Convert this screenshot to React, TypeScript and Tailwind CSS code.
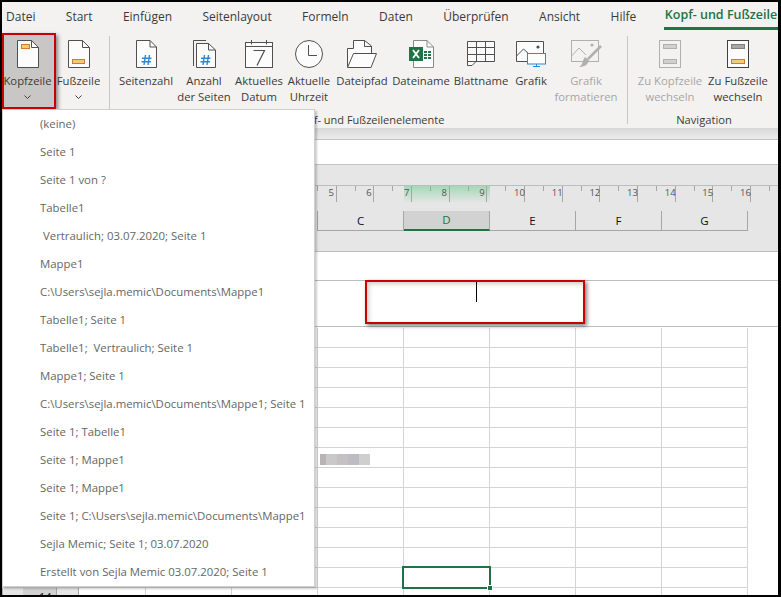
import type { ReactNode } from "react";

const FONT = "font-['Open_Sans','Noto_Sans',sans-serif]";

const tabs = ["Datei", "Start", "Einfügen", "Seitenlayout", "Formeln", "Daten", "Überprüfen", "Ansicht", "Hilfe"];

const menuItems = [
  "(keine)",
  "Seite 1",
  "Seite 1 von ?",
  "Tabelle1",
  "\u00a0Vertraulich; 03.07.2020; Seite 1",
  "Mappe1",
  "C:\\Users\\sejla.memic\\Documents\\Mappe1",
  "Tabelle1; Seite 1",
  "Tabelle1;\u00a0 Vertraulich; Seite 1",
  "Mappe1; Seite 1",
  "C:\\Users\\sejla.memic\\Documents\\Mappe1; Seite 1",
  "Seite 1; Tabelle1",
  "Seite 1; Mappe1",
  "Seite 1; Mappe1",
  "Seite 1; C:\\Users\\sejla.memic\\Documents\\Mappe1",
  "Sejla Memic; Seite 1; 03.07.2020",
  "Erstellt von Sejla Memic 03.07.2020; Seite 1",
];

const Page = ({ band }: { band: "top" | "bottom" }) => (
  <svg width="22" height="28" viewBox="0 0 22 28" fill="none">
    <path d="M.5 .5H14.5L21.5 7.5V27.5H.5Z" fill="#fcfcfc" stroke="#505050" />
    <path d="M14.5 .5V7.5H21.5" stroke="#505050" />
    {band === "top" ? (
      <rect x="4.5" y="4.5" width="8" height="4" fill="#f8c878" stroke="#d9772b" />
    ) : (
      <rect x="4.5" y="19.5" width="12" height="4" fill="#f8c878" stroke="#d9772b" />
    )}
  </svg>
);

const Hash = ({ stacked }: { stacked?: boolean }) => (
  <svg width={stacked ? 23 : 21} height="28" viewBox={stacked ? "0 0 23 28" : "2 0 21 28"} fill="none">
    {stacked && <path d="M.5 26V.5H13" stroke="#505050" />}
    <path d={stacked ? "M3.5 3.5H15.5L22.5 10V27.5H3.5Z" : "M2.5 .5H16L22.5 7V27.5H2.5Z"} fill="#fcfcfc" stroke="#505050" />
    <path d={stacked ? "M15.5 3.5V10H22.5" : "M16 .5V7H22.5"} stroke="#505050" />
    <path d="M11.5 15L10 25M15.5 15L14 25M8 18.2H17.5M7.5 21.8H17" stroke="#2b88d8" strokeWidth="1.4" />
  </svg>
);

const CalIcon = () => (
  <svg width="28" height="28" viewBox="0 0 28 28" fill="none">
    <rect x=".5" y="2.5" width="27" height="25" fill="#fcfcfc" stroke="#505050" />
    <path d="M.5 6.5H27.5" stroke="#505050" />
    <path d="M6.5 0V4.5M21.5 0V4.5" stroke="#505050" />
    <path d="M8.5 10.5H19.5L12 25.5" stroke="#505050" strokeWidth="1.2" />
  </svg>
);

const ClockIcon = () => (
  <svg width="28" height="28" viewBox="0 0 28 28" fill="none">
    <circle cx="14" cy="14" r="13.5" fill="#fcfcfc" stroke="#505050" />
    <path d="M13.5 5V15.5H22" stroke="#505050" />
  </svg>
);

const FolderIcon = () => (
  <svg width="30" height="28" viewBox="0 0 30 28" fill="none">
    <path d="M.5 27V8.5H6.5V.5H17.5L24.5 6V13" fill="#fcfcfc" stroke="#505050" />
    <path d="M17.5 .5V6.5H24.5" stroke="#505050" />
    <path d="M.5 27.5L6.5 13.5H29.5L24 27.5Z" fill="#fcfcfc" stroke="#505050" />
  </svg>
);

const ExcelIcon = () => (
  <svg width="25" height="28" viewBox="0 0 25 28" fill="none">
    <path d="M4.5 .5H18L24.5 7V27.5H4.5Z" fill="#fcfcfc" stroke="#8a8a8a" />
    <path d="M18 .5V7H24.5" stroke="#8a8a8a" />
    <rect x="0" y="7" width="14" height="14" fill="#1f7345" />
    <path d="M4 10L10 18M10 10L4 18" stroke="#fff" strokeWidth="1.8" />
    <path d="M15 11H18V13H15ZM19 11H22V13H19ZM15 14H18V16H15ZM19 14H22V16H19ZM15 17H18V19H15ZM19 17H22V19H19Z" fill="#1f7345" />
  </svg>
);

const SheetIcon = () => (
  <svg width="28" height="26" viewBox="0 0 28 26" fill="none">
    <path d="M.5 .5H27.5V20.5H9L5 24.5H.5Z" fill="#fcfcfc" stroke="#505050" />
    <path d="M.5 6.5H27.5M.5 13.5H27.5M.5 20.5H9M9.5 .5V20.5M18.5 .5V20.5" stroke="#505050" />
  </svg>
);

const PictureIcon = () => (
  <svg width="31" height="26" viewBox="0 0 31 26" fill="none">
    <path d="M11 20.5H.5V.5H27.5V12" fill="#fcfcfc" stroke="#505050" />
    <path d="M.5 15L7.5 8L13 13" stroke="#505050" />
    <circle cx="22" cy="6" r="1.6" fill="#505050" />
    <rect x="11.5" y="12.5" width="18" height="10.5" fill="#fcfcfc" stroke="#2b88d8" />
    <path d="M20.5 23V25.5M17 25.5H24" stroke="#2b88d8" />
  </svg>
);

const PictureFormatIcon = () => (
  <svg width="31" height="28" viewBox="0 0 31 28" fill="none">
    <rect x=".5" y=".5" width="27" height="21" stroke="#b0b0b0" />
    <path d="M.5 16L8 8L15 15" stroke="#b0b0b0" />
    <circle cx="21" cy="5" r="1.6" fill="#b0b0b0" />
    <path d="M30 6L17 19" stroke="#b0b0b0" strokeWidth="2.5" />
    <path d="M8 27C13 27 17 25 18 20L14 17C11 21 12 25 8 27Z" fill="#b0b0b0" />
  </svg>
);

const NavIcon = ({ active }: { active?: boolean }) => (
  <svg width="22" height="28" viewBox="0 0 22 28" fill="none">
    <rect x=".5" y=".5" width="21" height="27" fill={active ? "#fcfcfc" : "#f3f2f1"} stroke={active ? "#404040" : "#b0b0b0"} />
    <rect x="4.5" y="4.5" width="13" height="4" fill={active ? "#a8a8a8" : "#d0d0d0"} stroke={active ? "#808080" : "#b0b0b0"} />
    <rect
      x="4.5"
      y="19.5"
      width="13"
      height="4"
      fill={active ? "#f8c878" : "#d0d0d0"}
      stroke={active ? "#d9772b" : "#b0b0b0"}
    />
  </svg>
);

const Chevron = () => (
  <svg width="7" height="5" viewBox="0 0 7 5" fill="none">
    <path d="M.5 .5L3.5 3.5L6.5 .5" stroke="#404040" />
  </svg>
);

type ToolProps = {
  icon: ReactNode;
  lines: string[];
  width: string;
  disabled?: boolean;
  chevron?: boolean;
  selected?: boolean;
};

const Tool = ({ icon, lines, width, disabled, chevron, selected }: ToolProps) => (
  <div className={`${width} relative flex flex-col items-center shrink-0`}>
    {selected && (
      <div className="absolute left-0 top-[-7px] w-[54px] h-[76px] bg-[#c8c7c5] border-2 border-[#c80000] shadow-[2px_2px_4px_rgba(0,0,0,0.45)]" />
    )}
    <div className="relative h-[28px] flex items-center justify-center">{icon}</div>
    <div className={`relative mt-[5px] text-center text-[11.3px] leading-[16px] whitespace-nowrap ${disabled ? "text-[#a6a6a6]" : "text-[#3b3a39]"}`}>
      {lines.map((l) => (
        <div key={l}>{l}</div>
      ))}
      {chevron && (
        <div className="h-[16px] flex items-center justify-center">
          <Chevron />
        </div>
      )}
    </div>
  </div>
);

const Divider = ({ className }: { className: string }) => (
  <div className={`w-px h-[88px] mt-[4px] bg-[#c8c6c4] shrink-0 ${className}`} />
);

const rulerNums = [5, 6, 7, 8, 9, 10, 11, 12, 13, 14, 15, 16];
const columns = ["C", "D", "E", "F", "G"];
const rows = Array.from({ length: 14 }, (_, i) => i);
const cellCols = [
  "w-[67px]",
  "w-[86px]",
  "w-[86px]",
  "w-[86px]",
  "w-[86px]",
  "w-[86px]",
  "w-[86px]",
  "w-[86px]",
];

const Ruler = () => (
  <svg width="776" height="18" viewBox="0 0 776 18" className="block">
    <defs>
      <linearGradient id="sel" x1="0" y1="0" x2="0" y2="1">
        <stop offset="0" stopColor="#a3d9b6" />
        <stop offset="1" stopColor="#e6e6e6" />
      </linearGradient>
    </defs>
    <rect x="402" y="1" width="86" height="17" fill="url(#sel)" />
    <path d="M0 .5H776" stroke="#bdbdbd" />
    {rulerNums.map((n, i) => {
      const x = 333.8 + i * 37.65;
      return (
        <g key={n}>
          <path d={`M${Math.round(x) + 0.5} 1V17`} stroke="#a6a6a6" />
          <path d={`M${Math.round(x - 18.8) + 0.5} 1V6`} stroke="#a6a6a6" />
          <text x={x - 4.5} y="10.5" fontSize="9.5" fill="#555" textAnchor="middle">
            {n}
          </text>
        </g>
      );
    })}
    <path d={`M${Math.round(333.8 + 12 * 37.65 - 18.8) + 0.5} 1V6`} stroke="#a6a6a6" />
  </svg>
);

const blurBlocks = [
  "w-[6px] bg-[#b9b3b6]",
  "w-[11px] bg-[#cbc8ca]",
  "w-[11px] bg-[#c4c1c3]",
  "w-[11px] bg-[#bcbcc2]",
  "w-[11px] bg-[#cfcfcf]",
];

export default function App() {
  return (
    <div className={`${FONT} relative w-[781px] h-[597px] overflow-hidden bg-white border-black border-t-2 border-l-2 border-r-[3px] border-b-2 flex flex-col`}>
      {/* tabs */}
      <div className="relative h-[30px] shrink-0 bg-[#f3f2f1] flex items-center pl-[4px] gap-[30.4px] text-[12px] text-[#3b3a39] whitespace-nowrap">
        {tabs.map((t) => (
          <span key={t}>{t}</span>
        ))}
        <div className="absolute right-0 top-0 h-[28px] w-[114px] border-b-[3px] border-[#217346] font-semibold text-[12.5px] text-[#217346] leading-[26px] text-center">
          Kopf- und Fußzeile
        </div>
      </div>

      {/* ribbon */}
      <div className="h-[96px] shrink-0 bg-[#f3f2f1] flex text-[#3b3a39]">
        <div className="flex pt-[8px] items-start">
          <Tool width="w-[51px]" selected icon={<Page band="top" />} lines={["Kopfzeile"]} chevron />
          <Tool width="w-[51px]" icon={<Page band="bottom" />} lines={["Fußzeile"]} chevron />
        </div>
        <Divider className="ml-[5px]" />
        <div className="ml-[8px] flex flex-col pt-[8px]">
          <div className="h-[72px] flex">
            <Tool width="w-[56px]" icon={<Hash />} lines={["Seitenzahl"]} />
            <Tool width="w-[60px]" icon={<Hash stacked />} lines={["Anzahl", "der Seiten"]} />
            <Tool width="w-[50px]" icon={<CalIcon />} lines={["Aktuelles", "Datum"]} />
            <Tool width="w-[50px]" icon={<ClockIcon />} lines={["Aktuelle", "Uhrzeit"]} />
            <Tool width="w-[56px]" icon={<FolderIcon />} lines={["Dateipfad"]} />
            <Tool width="w-[62px]" icon={<ExcelIcon />} lines={["Dateiname"]} />
            <Tool width="w-[58px]" icon={<SheetIcon />} lines={["Blattname"]} />
            <Tool width="w-[42px]" icon={<PictureIcon />} lines={["Grafik"]} />
            <Tool width="w-[68px]" disabled icon={<PictureFormatIcon />} lines={["Grafik", "formatieren"]} />
          </div>
          <div className="h-[16px] text-center text-[11px] leading-[16px]">Kopf- und Fußzeilenelemente</div>
        </div>
        <Divider className="ml-[7px]" />
        <div className="ml-[8px] flex flex-col pt-[8px]">
          <div className="h-[72px] flex">
            <Tool width="w-[68px]" disabled icon={<NavIcon />} lines={["Zu Kopfzeile", "wechseln"]} />
            <Tool width="w-[68px]" icon={<NavIcon active />} lines={["Zu Fußzeile", "wechseln"]} />
          </div>
          <div className="h-[16px] text-center text-[11.2px] leading-[16px]">Navigation</div>
        </div>
      </div>

      {/* ribbon shadow */}
      <div className="h-[11px] shrink-0 bg-gradient-to-b from-[#d8d8d8] to-[#ececec]" />

      {/* formula bar */}
      <div className="h-[26px] shrink-0 bg-white border-y border-[#c4c4c4]" />

      {/* ruler + column headers */}
      <div className="h-[86px] shrink-0 bg-[#e6e6e6] pt-[20px]">
        <Ruler />
        <div className="mt-[8px] ml-[315px] flex h-[20px] border-l border-[#a6a6a6] w-fit">
          {columns.map((c) => (
            <div
              key={c}
              className={
                c === "D"
                  ? "w-[86px] bg-[#d2d2d2] border-b-2 border-b-[#217346] border-r border-r-[#a6a6a6] flex items-center justify-center text-[11.5px] text-[#217346]"
                  : "w-[86px] border-b border-[#a6a6a6] border-r flex items-center justify-center text-[11.5px] text-[#111]"
              }
            >
              {c}
            </div>
          ))}
        </div>
      </div>

      {/* page header area */}
      <div className="h-[29px] shrink-0 bg-white border-t border-[#bdbdbd]" />
      <div className="h-[47px] shrink-0 bg-white border-y border-[#bdbdbd]" />

      {/* sheet grid */}
      <div className="relative flex-1 overflow-hidden pt-[1px]">
        {rows.map((r) => (
          <div key={r} className="flex h-[20px] border-b border-[#d4d4d4] w-[746px]">
            <div className="w-[77px] bg-[#e6e6e6] border-x border-[#a6a6a6] flex">
              {r === 13 && (
                <>
                  <div className="ml-[20px] w-[34px] bg-[#d2d2d2] border-r border-[#a6a6a6] pl-[16px] flex items-center text-[11px] text-[#111]">
                    14
                  </div>
                </>
              )}
            </div>
            {cellCols.map((w, i) => (
              <div key={i} className={`${w} border-r border-[#d4d4d4]`} />
            ))}
          </div>
        ))}

        {/* pixelated value */}
        <div className="absolute left-[318px] top-[127px] flex h-[11px]">
          {blurBlocks.map((b) => (
            <div key={b} className={`${b} h-full`} />
          ))}
        </div>

        {/* selected cell */}
        <div className="absolute left-[400px] top-[239px] w-[89px] h-[23px] border-2 border-[#217346]">
          <div className="absolute right-[-4px] bottom-[-4px] w-[6px] h-[6px] bg-[#217346] border border-white" />
        </div>
      </div>

      {/* header box highlight */}
      <div className="absolute left-[363px] top-[278px] w-[220px] h-[44px] border-[2px] border-[#c80000] shadow-[2px_2px_4px_rgba(0,0,0,0.5),inset_2px_2px_4px_rgba(0,0,0,0.2)]" />
      <div className="absolute left-[474px] top-[280px] w-px h-[20px] bg-black" />

      {/* dropdown */}
      <div className="absolute left-0 top-[107px] w-[313px] h-[478px] bg-white border border-[#d0d0d0] shadow-[2px_2px_2px_rgba(0,0,0,0.2)] z-10">
        {menuItems.map((m, i) => (
          <div key={i} className="h-[28px] pl-[37px] flex items-center text-[11.4px] text-[#666] whitespace-pre">
            {m}
          </div>
        ))}
      </div>
    </div>
  );
}
